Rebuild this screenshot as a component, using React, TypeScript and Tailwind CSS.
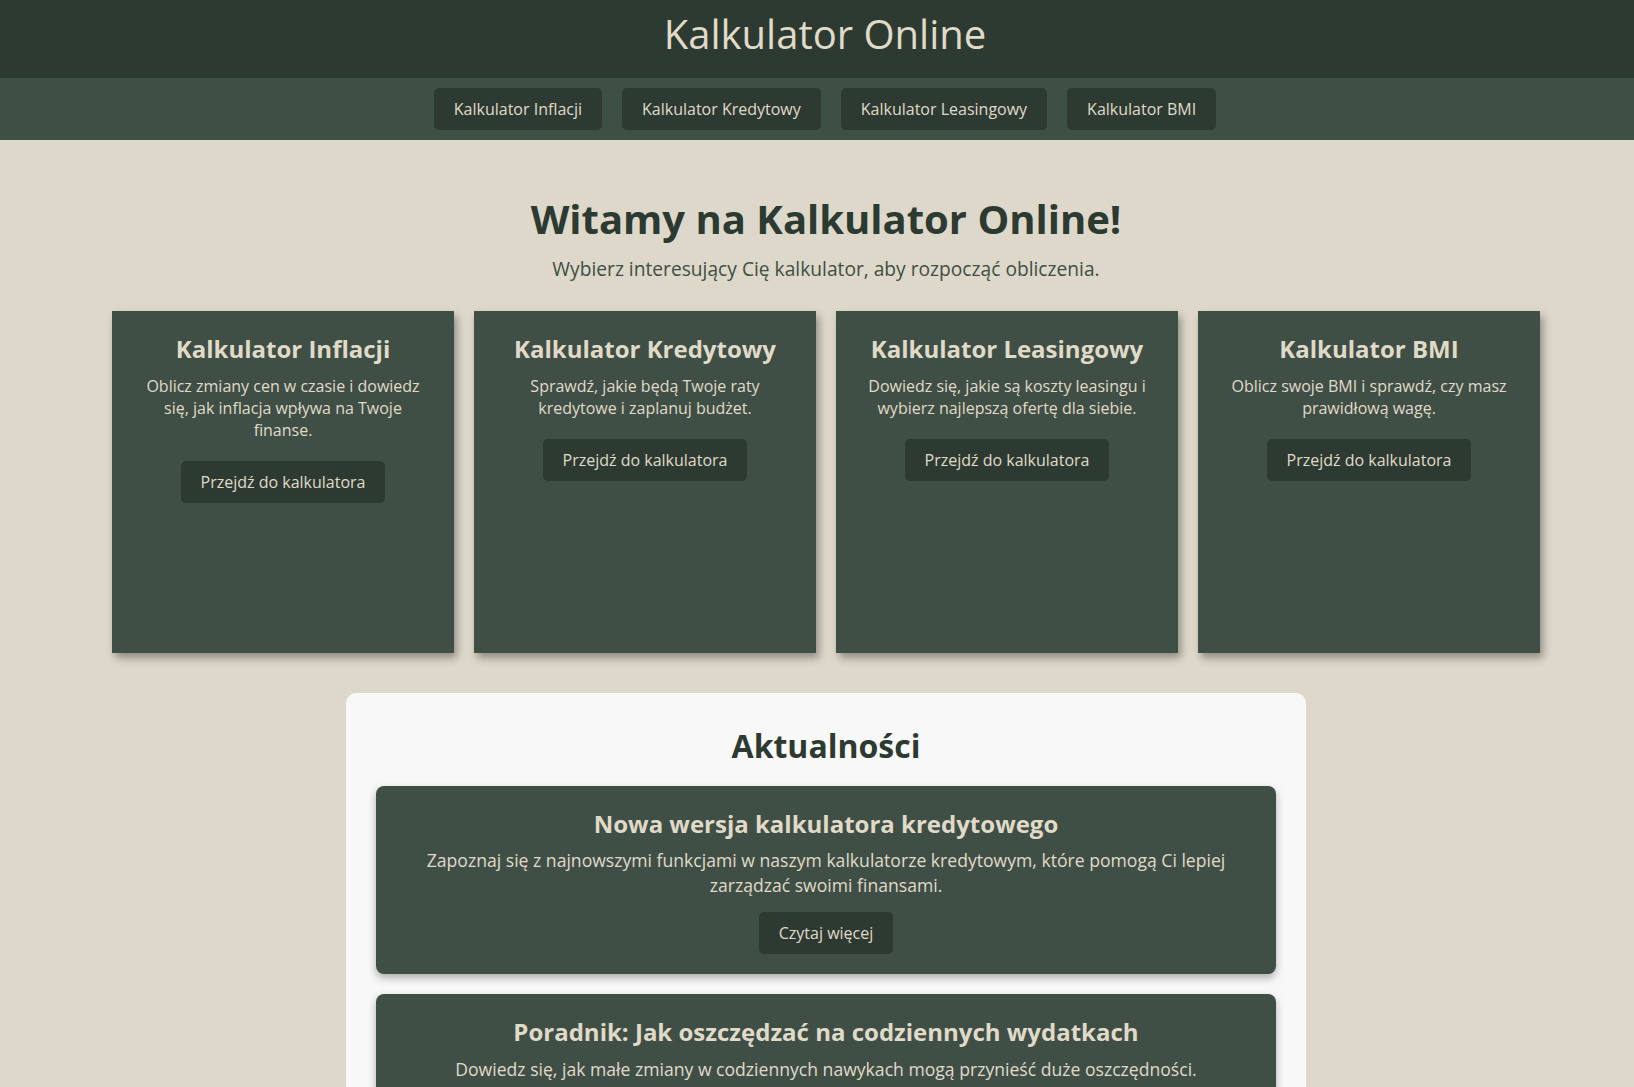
const navItems = ["Kalkulator Inflacji", "Kalkulator Kredytowy", "Kalkulator Leasingowy", "Kalkulator BMI"]

const calculators = [
  {
    title: "Kalkulator Inflacji",
    text: "Oblicz zmiany cen w czasie i dowiedz się, jak inflacja wpływa na Twoje finanse.",
  },
  {
    title: "Kalkulator Kredytowy",
    text: "Sprawdź, jakie będą Twoje raty kredytowe i zaplanuj budżet.",
  },
  {
    title: "Kalkulator Leasingowy",
    text: "Dowiedz się, jakie są koszty leasingu i wybierz najlepszą ofertę dla siebie.",
  },
  {
    title: "Kalkulator BMI",
    text: "Oblicz swoje BMI i sprawdź, czy masz prawidłową wagę.",
  },
]

const news = [
  {
    title: "Nowa wersja kalkulatora kredytowego",
    text: "Zapoznaj się z najnowszymi funkcjami w naszym kalkulatorze kredytowym, które pomogą Ci lepiej zarządzać swoimi finansami.",
  },
  {
    title: "Poradnik: Jak oszczędzać na codziennych wydatkach",
    text: "Dowiedz się, jak małe zmiany w codziennych nawykach mogą przynieść duże oszczędności.",
  },
]

const App = () => {
  return (
    <div className="min-h-screen bg-[#ddd8ca] font-['Open_Sans',sans-serif] text-[#2c3a31]">
      <header className="h-[78px] bg-[#2c3a31] pl-4 pt-[7px] text-center">
        <h1 className="text-[40px] leading-[1.362] font-normal text-[#e0dac9]">Kalkulator Online</h1>
      </header>

      <nav className="flex h-[62px] items-center justify-center gap-5 bg-[#3e4f44] pl-4">
        {navItems.map((item) => (
          <a
            key={item}
            href="#"
            className="rounded-[5px] bg-[#2c3a31] px-5 py-2.5 text-base leading-[22px] text-[#e0dac9]"
          >
            {item}
          </a>
        ))}
      </nav>

      <main className="pl-[18px] pt-[52px] pb-10">
        <section className="text-center">
          <h2 className="text-[40px] leading-[1.362] font-bold">Witamy na Kalkulator Online!</h2>
          <p className="mt-[10px] text-[19.2px] leading-[1.362] text-[#3e4f44]">
            Wybierz interesujący Cię kalkulator, aby rozpocząć obliczenia.
          </p>
        </section>

        <section className="mt-[28px] flex justify-center gap-5">
          {calculators.map((c) => (
            <div
              key={c.title}
              className="flex h-[342px] w-[342px] flex-col items-center bg-[#3f4f45] px-[25px] pt-[22px] text-center text-[#e0dac9] shadow-[3px_5px_8px_rgba(0,0,0,0.35)]"
            >
              <h3 className="text-2xl leading-[1.362] font-bold">{c.title}</h3>
              <p className="mt-[10px] text-base leading-[22px]">{c.text}</p>
              <a href="#" className="mt-5 rounded-[5px] bg-[#2c3a31] px-5 py-2.5 text-base leading-[22px]">
                Przejdź do kalkulatora
              </a>
            </div>
          ))}
        </section>

        <section className="mx-auto mt-10 w-[960px] rounded-[10px] bg-[#f8f8f8] px-[30px] pt-[29px] pb-[30px]">
          <h2 className="text-center text-[32px] leading-[48px] font-bold text-[#2c3a31]">Aktualności</h2>
          <div className="mt-[16px] flex flex-col gap-5">
            {news.map((n) => (
              <article
                key={n.title}
                className="flex flex-col items-center rounded-lg bg-[#3f4f45] px-5 pt-[22px] pb-5 text-center text-[#e0dac9] shadow-[0_4px_8px_rgba(0,0,0,0.3)]"
              >
                <h3 className="text-2xl leading-[1.362] font-bold">{n.title}</h3>
                <p className="mt-2 text-[17.6px] leading-[25px]">{n.text}</p>
                <a href="#" className="mt-3.5 rounded-[5px] bg-[#2c3a31] px-5 py-2.5 text-base leading-[22px]">
                  Czytaj więcej
                </a>
              </article>
            ))}
          </div>
        </section>
      </main>
    </div>
  )
}

export default App
